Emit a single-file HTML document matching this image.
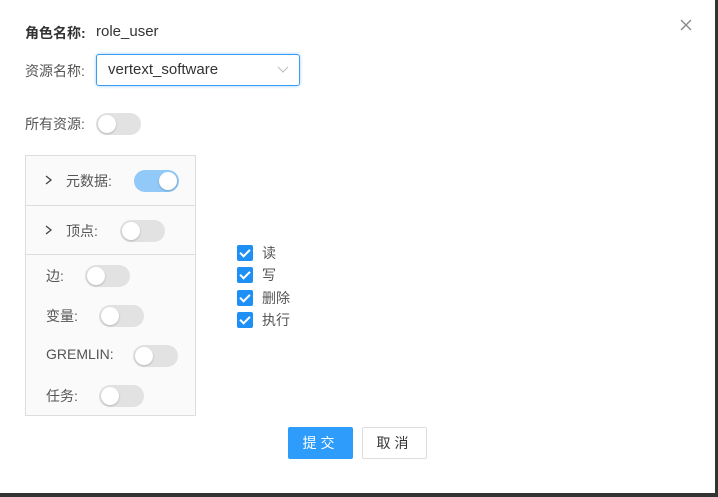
<!DOCTYPE html>
<html><head><meta charset="utf-8"><style>
*{box-sizing:border-box;margin:0;padding:0}
body{width:718px;height:497px;background:#fff;position:relative;overflow:hidden;font-family:"Liberation Sans","Noto Sans CJK SC",sans-serif;font-size:14px;color:#333}
.a{position:absolute;white-space:nowrap}
.sw{position:absolute;width:45px;height:22px;border-radius:11px;background:#e2e2e2}
.sw::after{content:"";position:absolute;left:2px;top:2px;width:18px;height:18px;border-radius:50%;background:#fff;box-shadow:0 1px 2px rgba(0,0,0,.2)}
.sw.on{background:#91c9f8}.sw.on::after{left:25px}
.cb{position:absolute;left:237px;width:16px;height:16px;background:#1e8ff5;border-radius:2px}
.cb::after{content:"";position:absolute;left:5px;top:2px;width:4px;height:8px;border:solid #fff;border-width:0 2px 2px 0;transform:rotate(45deg)}
.lbl{color:#555}
</style></head><body>
<div class="a" style="left:715px;top:0;width:3px;height:497px;background:#333"></div>
<div class="a" style="left:0;top:493px;width:718px;height:4px;background:#333"></div>
<svg class="a" style="left:680px;top:19px" width="12" height="12"><path d="M1 1L11 11M11 1L1 11" stroke="#888" stroke-width="1.3"/></svg>
<div class="a" style="left:25px;top:23px;font-weight:bold;color:#333">角色名称:</div>
<div class="a" style="left:96px;top:23px;font-size:15px">role_user</div>
<div class="a lbl" style="left:25px;top:61px">资源名称:</div>
<div class="a" style="left:96px;top:54px;width:204px;height:32px;border:1px solid #3a9df5;border-radius:3px;box-shadow:0 0 3px #9ccff8"></div>
<div class="a" style="left:108px;top:61px;font-size:15px">vertext_software</div>
<svg class="a" style="left:277px;top:66px" width="12" height="8"><path d="M1 1L6 6L11 1" stroke="#bbb" fill="none"/></svg>
<div class="a lbl" style="left:25px;top:114px">所有资源:</div>
<div class="sw" style="left:96px;top:113px"></div>
<div class="a" style="left:25px;top:155px;width:171px;height:261px;border:1px solid #ddd;background:#fafafa"></div>
<div class="a" style="left:26px;top:205px;width:169px;height:1px;background:#ddd"></div>
<div class="a" style="left:26px;top:254px;width:169px;height:1px;background:#ddd"></div>
<svg class="a" style="left:45px;top:175px" width="8" height="10"><path d="M1 1L6 5L1 9" stroke="#444" fill="none" stroke-width="1.3"/></svg>
<div class="a lbl" style="left:66px;top:171px">元数据:</div>
<div class="sw on" style="left:134px;top:170px"></div>
<svg class="a" style="left:45px;top:225px" width="8" height="10"><path d="M1 1L6 5L1 9" stroke="#444" fill="none" stroke-width="1.3"/></svg>
<div class="a lbl" style="left:66px;top:221px">顶点:</div>
<div class="sw" style="left:120px;top:220px"></div>
<div class="a lbl" style="left:46px;top:266px">边:</div>
<div class="sw" style="left:85px;top:265px"></div>
<div class="a lbl" style="left:46px;top:306px">变量:</div>
<div class="sw" style="left:99px;top:305px"></div>
<div class="a lbl" style="left:46px;top:346px">GREMLIN:</div>
<div class="sw" style="left:133px;top:345px"></div>
<div class="a lbl" style="left:46px;top:386px">任务:</div>
<div class="sw" style="left:99px;top:385px"></div>
<div class="cb" style="top:245px"></div><div class="a lbl" style="left:262px;top:243px">读</div>
<div class="cb" style="top:267px"></div><div class="a lbl" style="left:262px;top:265px">写</div>
<div class="cb" style="top:290px"></div><div class="a lbl" style="left:262px;top:288px">删除</div>
<div class="cb" style="top:312px"></div><div class="a lbl" style="left:262px;top:310px">执行</div>
<div class="a" style="left:288px;top:427px;width:65px;height:32px;background:#2d9cfb;border-radius:2px;color:#fff;text-align:center;line-height:32px;letter-spacing:4px">提交</div>
<div class="a" style="left:362px;top:427px;width:65px;height:32px;border:1px solid #ddd;border-radius:2px;text-align:center;line-height:30px;letter-spacing:4px">取消</div>
</body></html>
